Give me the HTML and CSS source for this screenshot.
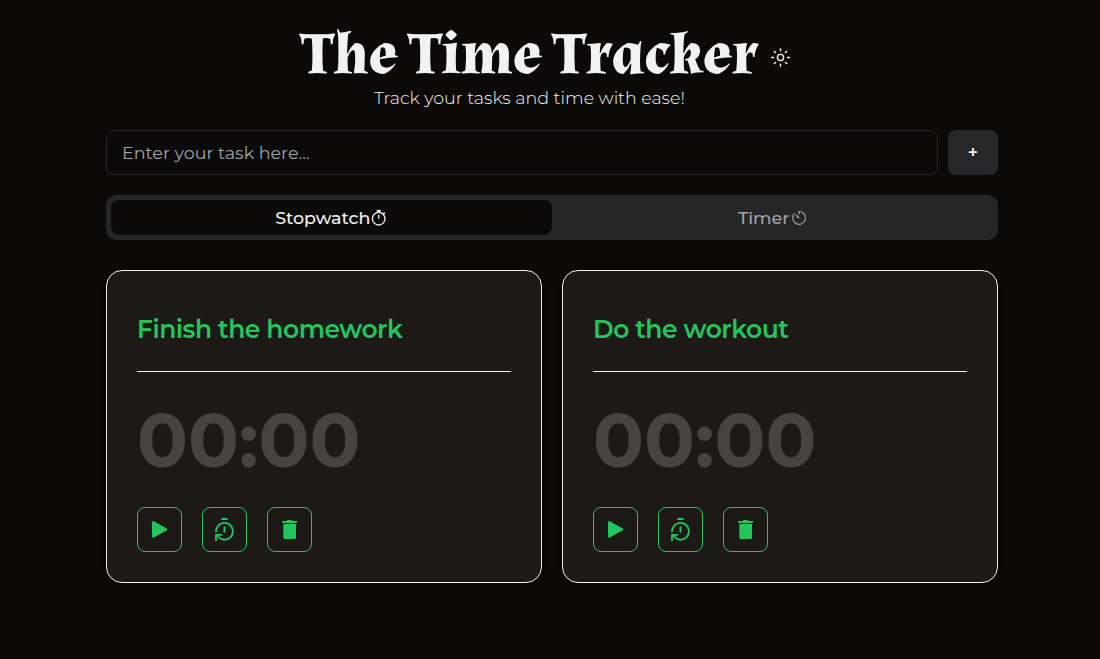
FILE: index.html
```html
<!DOCTYPE html>
<html lang="en">
<head>
<meta charset="utf-8">
<title>The Time Tracker</title>
<link rel="stylesheet" href="styles.css">
</head>
<body>
<svg class="sprite" aria-hidden="true">
  <symbol id="play" viewBox="0 0 24 24"><path fill="currentColor" stroke="currentColor" stroke-width="2" stroke-linejoin="round" d="M6 5v14.8L19.4 12.4z"/></symbol>
  <symbol id="reset" viewBox="0 0 24 24"><path fill="none" stroke="currentColor" stroke-width="1.9" d="M9.2 2h6.4M12.5 9.5v6M4.2 15.2A8.4 8.4 0 1 1 12.6 22.7C9 22.7 7 21 4.6 18M4 24v-6.1h6.3"/></symbol>
  <symbol id="trash" viewBox="0 0 24 24"><path fill="currentColor" d="M5.2 4h4.3l1-1h4.2l1 1H20v2H5.2zM6.3 7H19v13.2a1.9 1.9 0 0 1-1.9 1.9H8.2a1.9 1.9 0 0 1-1.9-1.9z"/></symbol>
</svg>
<main class="app">
  <header class="header">
    <div class="title-row">
      <h1 class="title">The Time Tracker</h1>
      <button class="theme" aria-label="Toggle theme">
        <svg viewBox="0 0 20 20" class="sun"><g fill="none" stroke="currentColor" stroke-width="1.4"><circle cx="10.5" cy="9.5" r="3.1"/><path d="M10.5 .2v3M10.5 15.8v3M1.1 9.5h3M16.9 9.5h3M3.9 2.9l2.1 2.1M15 14l2.1 2.1M3.9 16.1l2.1-2.1M15 5l2.1-2.1"/></g></svg>
      </button>
    </div>
    <p class="subtitle">Track your tasks and time with ease!</p>
  </header>
  <form class="task-form">
    <input class="task-input" type="text" placeholder="Enter your task here...">
    <button class="add" type="button">+</button>
  </form>
  <div class="tabs">
    <button class="tab tab-active"><span>Stopwatch</span><svg class="tab-icon" viewBox="0 0 17.5 17.5"><g fill="none" stroke="currentColor" stroke-width="1.3"><circle cx="8.7" cy="9.7" r="6.3"/><path d="M8.7 5.8v4M8.7 1.5v2M13 5.3l1.3-1.3M13.7 3.4l1.2 1.2"/><path stroke-width="1.8" d="M6.6 1.8h4.2"/></g></svg></button>
    <button class="tab"><span>Timer</span><svg class="tab-icon" viewBox="0 0 17.5 17.5"><g fill="none" stroke="currentColor" stroke-width="1.2"><path d="M4.6 4.4A6.4 6.4 0 1 0 9 2.5V5.2"/><path stroke-width="1.7" d="M6 6l3 3"/></g></svg></button>
  </div>
  <section class="cards">
    <article class="card">
      <h2 class="card-title">Finish the homework</h2>
      <div class="time">00:00</div>
      <div class="actions">
        <button class="action" aria-label="Start"><svg class="icon"><use href="#play"/></svg></button>
        <button class="action" aria-label="Reset"><svg class="icon"><use href="#reset"/></svg></button>
        <button class="action" aria-label="Delete"><svg class="icon"><use href="#trash"/></svg></button>
      </div>
    </article>
    <article class="card">
      <h2 class="card-title">Do the workout</h2>
      <div class="time">00:00</div>
      <div class="actions">
        <button class="action" aria-label="Start"><svg class="icon"><use href="#play"/></svg></button>
        <button class="action" aria-label="Reset"><svg class="icon"><use href="#reset"/></svg></button>
        <button class="action" aria-label="Delete"><svg class="icon"><use href="#trash"/></svg></button>
      </div>
    </article>
  </section>
</main>
</body>
</html>
```
FILE: styles.css
```css
* { box-sizing: border-box; margin: 0; }
body { background: #0c0a09; color: #f2f2f2; font-family: Montserrat, Inter, sans-serif; font-size: 17.5px; overflow: hidden; }
button, input { font: inherit; color: inherit; border: 0; background: none; padding: 0; }
.sprite { display: none; }
.app { width: 892px; margin-left: 106px; padding-top: 20px; }
.header { height: 110px; }
.title-row { display: flex; align-items: center; height: 65px; margin-left: 194.5px; gap: 9.5px; }
.title { width: 460px; padding-top: 4px; white-space: nowrap; font: 700 60px/60px Almendra, "Liberation Serif", serif; }
.theme { width: 20px; height: 20px; margin-top: 10px; }
.sun { display: block; width: 20px; height: 20px; }
.subtitle { margin-left: 268px; line-height: 25px; font-weight: 300; white-space: nowrap; }
.task-form { display: flex; gap: 10px; height: 45px; }
.task-input { flex: 1; border: 1px solid #27272a; border-radius: 8px; padding: 0 15px; }
.task-input::placeholder { color: #a1a1aa; opacity: 1; }
.add { width: 50px; border-radius: 8px; background: #27272a; font-size: 17.5px; line-height: 20px; padding-top: 1px; font-weight: 600; }
.tabs { display: grid; grid-template-columns: 1fr 1fr; height: 45px; margin-top: 20px; padding: 5px; border-radius: 10px; background: #262626; }
.tab { display: flex; align-items: center; justify-content: center; border-radius: 8px; color: #a1a1aa; font-weight: 500; }
.tab-active { background: #0c0a09; color: #f2f2f2; }
.tab-icon { width: 17.5px; height: 17.5px; }
.cards { display: grid; grid-template-columns: 1fr 1fr; gap: 20px; margin-top: 30px; }
.card { height: 313px; padding: 30px 30px; border: 1px solid #f2f2f2; border-radius: 16px; background: #1c1917; box-shadow: 0 1px 4px #000; }
.card-title { height: 71px; border-bottom: 1px solid #f2f2f2; color: #22c55e; font-size: 25px; font-weight: 600; line-height: 57px; letter-spacing: -.48px; white-space: nowrap; }
.time { height: 135px; color: #464442; font-size: 75px; font-weight: 700; line-height: 137px; white-space: nowrap; }
.actions { display: flex; gap: 20px; }
.action { display: grid; place-items: center; width: 45px; height: 45px; border: 1px solid #22c55e; border-radius: 8px; color: #22c55e; }
.icon { width: 24px; height: 24px; margin: 0 1px 1px 0; }
```
